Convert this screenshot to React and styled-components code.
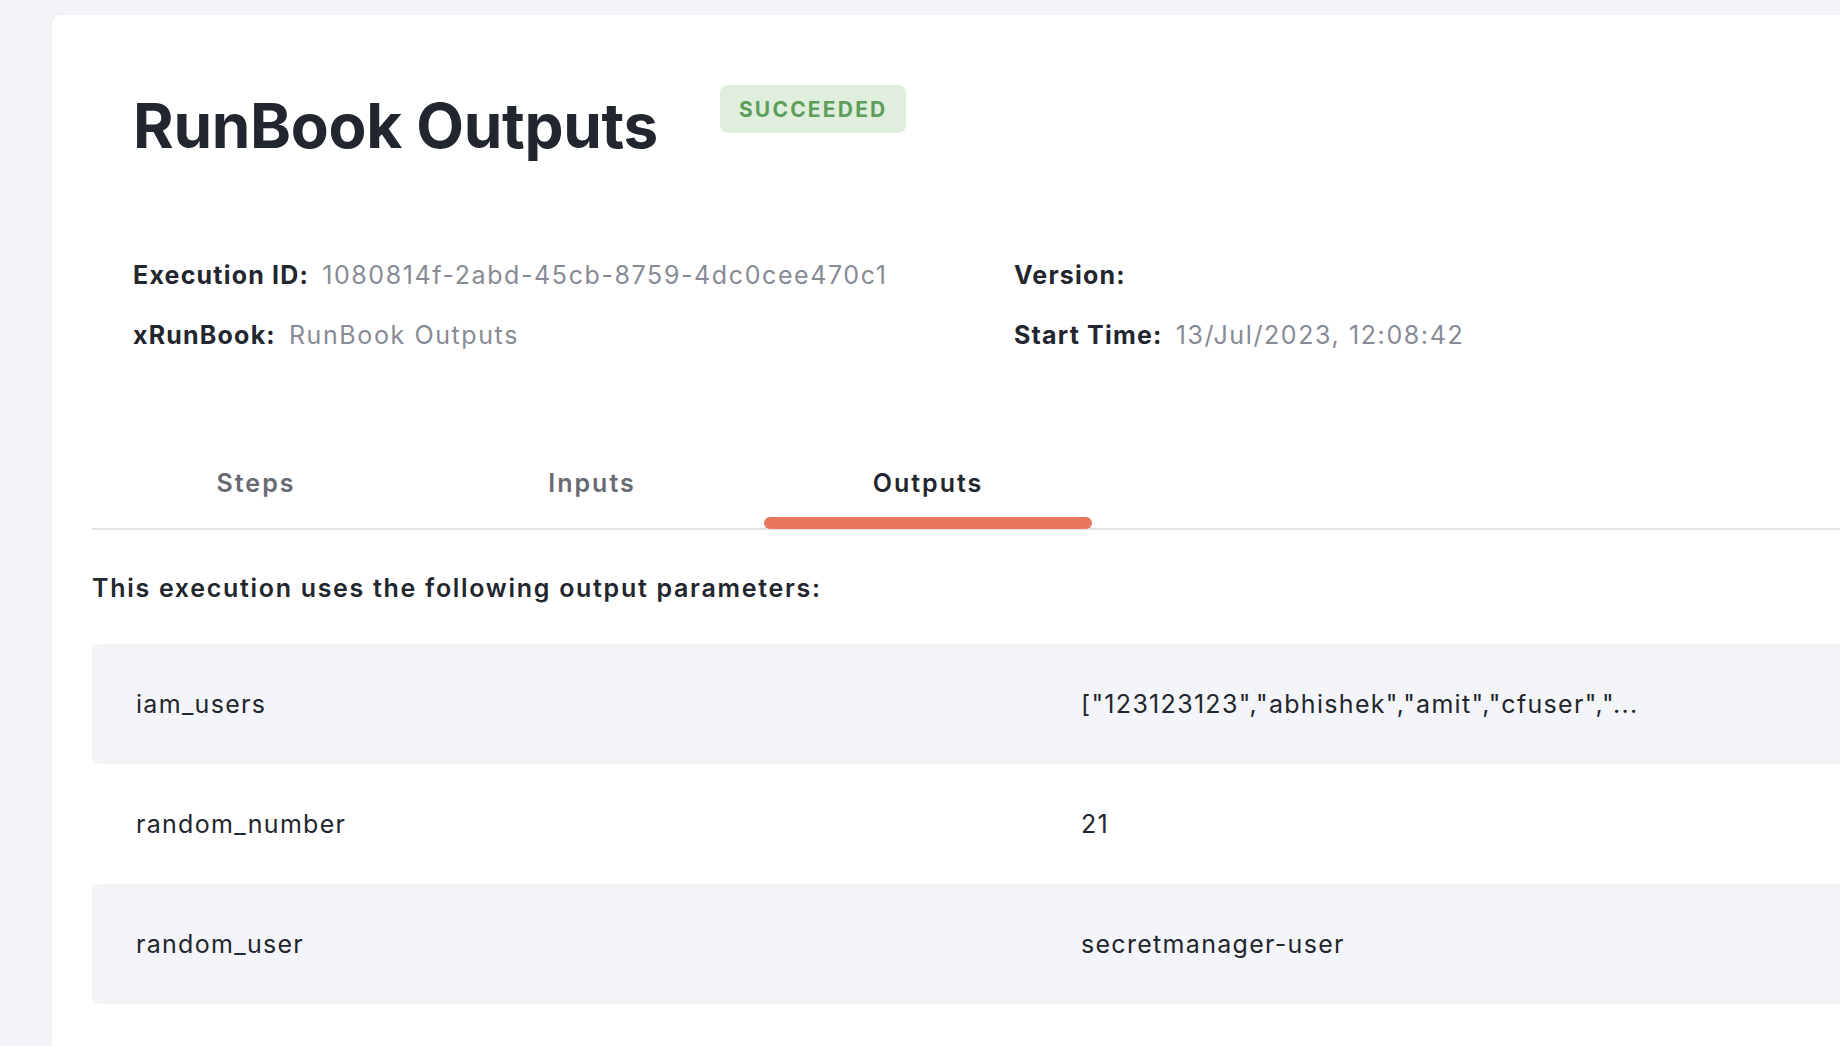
import React, { useState } from "react";
import styled, { createGlobalStyle } from "styled-components";

const GlobalStyle = createGlobalStyle`
  html, body {
    margin: 0;
    padding: 0;
    background: #f4f5f8;
    overflow: hidden;
  }
  body {
    font-family: Inter, "Noto Sans", "Liberation Sans", sans-serif;
    color: #22262e;
  }
  * {
    box-sizing: border-box;
  }
`;

const outputs = [
  {
    name: "iam_users",
    value: '["123123123","abhishek","amit","cfuser","...',
  },
  { name: "random_number", value: "21" },
  { name: "random_user", value: "secretmanager-user" },
];

const tabs = ["Steps", "Inputs", "Outputs"];

export default function App() {
  const [active, setActive] = useState(2);

  return (
    <Page>
      <GlobalStyle />
      <Card>
        <Header>
          <Title>RunBook Outputs</Title>
          <StatusBadge>SUCCEEDED</StatusBadge>
        </Header>

        <InfoGrid>
          <InfoItem>
            <InfoLabel>Execution ID:</InfoLabel>
            <InfoValue>1080814f-2abd-45cb-8759-4dc0cee470c1</InfoValue>
          </InfoItem>
          <InfoItem>
            <InfoLabel>Version:</InfoLabel>
            <InfoValue></InfoValue>
          </InfoItem>
          <InfoItem>
            <InfoLabel>xRunBook:</InfoLabel>
            <InfoValue>RunBook Outputs</InfoValue>
          </InfoItem>
          <InfoItem>
            <InfoLabel>Start Time:</InfoLabel>
            <InfoValue>13/Jul/2023, 12:08:42</InfoValue>
          </InfoItem>
        </InfoGrid>

        <TabBar>
          {tabs.map((t, i) => (
            <Tab key={t} $active={i === active} onClick={() => setActive(i)}>
              {t}
            </Tab>
          ))}
        </TabBar>

        <SectionTitle>This execution uses the following output parameters:</SectionTitle>

        <OutputTable>
          {outputs.map((o, i) => (
            <OutputRow key={o.name} $shaded={i % 2 === 0}>
              <Cell>{o.name}</Cell>
              <Cell>{o.value}</Cell>
            </OutputRow>
          ))}
        </OutputTable>
      </Card>
    </Page>
  );
}

const Page = styled.div`
  width: 100%;
  height: 1046px;
  padding: 15px 0 0 52px;
`;

const Card = styled.div`
  width: calc(100% + 100px);
  height: 1200px;
  background: #ffffff;
  border-radius: 8px 0 0 0;
  box-shadow: -1px 0 4px rgba(30, 40, 60, 0.04);
  padding: 0 0 0 40px;
`;

const Header = styled.div`
  display: flex;
  align-items: flex-start;
  padding: 70px 0 0 41px;
`;

const Title = styled.h1`
  margin: 5px 0 0;
  font-size: 62px;
  line-height: 72px;
  font-weight: 700;
  color: #22262e;
  letter-spacing: -0.3px;
`;

const StatusBadge = styled.span`
  margin-left: 62px;
  height: 48px;
  padding: 0 19px;
  display: inline-flex;
  align-items: center;
  border-radius: 8px;
  background: #e0eedd;
  color: #5e9e5b;
  font-size: 21px;
  font-weight: 700;
  letter-spacing: 2.2px;
`;

const InfoGrid = styled.div`
  display: grid;
  grid-template-columns: 881px 1fr;
  row-gap: 30px;
  padding: 98px 0 0 41px;
`;

const InfoItem = styled.div`
  display: flex;
  align-items: baseline;
  font-size: 25px;
  line-height: 30px;
`;

const InfoLabel = styled.span`
  font-weight: 700;
  letter-spacing: 1.2px;
  color: #22262e;
  margin-right: 13px;
`;

const InfoValue = styled.span`
  font-weight: 400;
  letter-spacing: 1.6px;
  color: #878b94;
`;

const TabBar = styled.div`
  display: flex;
  gap: 8px;
  margin-top: 98px;
  border-bottom: 2px solid #e1e3e7;
`;

const Tab = styled.div`
  position: relative;
  width: 328px;
  height: 80px;
  display: flex;
  justify-content: center;
  padding-top: 20px;
  font-size: 25px;
  line-height: 30px;
  font-weight: 600;
  letter-spacing: 2px;
  color: ${(p) => (p.$active ? "#22262e" : "#686b72")};
  cursor: pointer;

  &::after {
    content: "";
    display: ${(p) => (p.$active ? "block" : "none")};
    position: absolute;
    left: 0;
    right: 0;
    bottom: -1px;
    height: 12px;
    border-radius: 6px;
    background: #e8775d;
  }
`;

const SectionTitle = styled.h2`
  margin: 43px 0 0;
  font-size: 25px;
  line-height: 30px;
  font-weight: 600;
  letter-spacing: 1.7px;
  color: #22262e;
`;

const OutputTable = styled.div`
  margin-top: 41px;
  display: flex;
  flex-direction: column;
`;

const OutputRow = styled.div`
  display: grid;
  grid-template-columns: 945px 1fr;
  height: 120px;
  align-items: center;
  border-radius: 6px;
  background: ${(p) => (p.$shaded ? "#f4f5f8" : "#ffffff")};
`;

const Cell = styled.div`
  padding-left: 44px;
  font-size: 25px;
  line-height: 30px;
  letter-spacing: 1.3px;
  color: #22262e;
`;
